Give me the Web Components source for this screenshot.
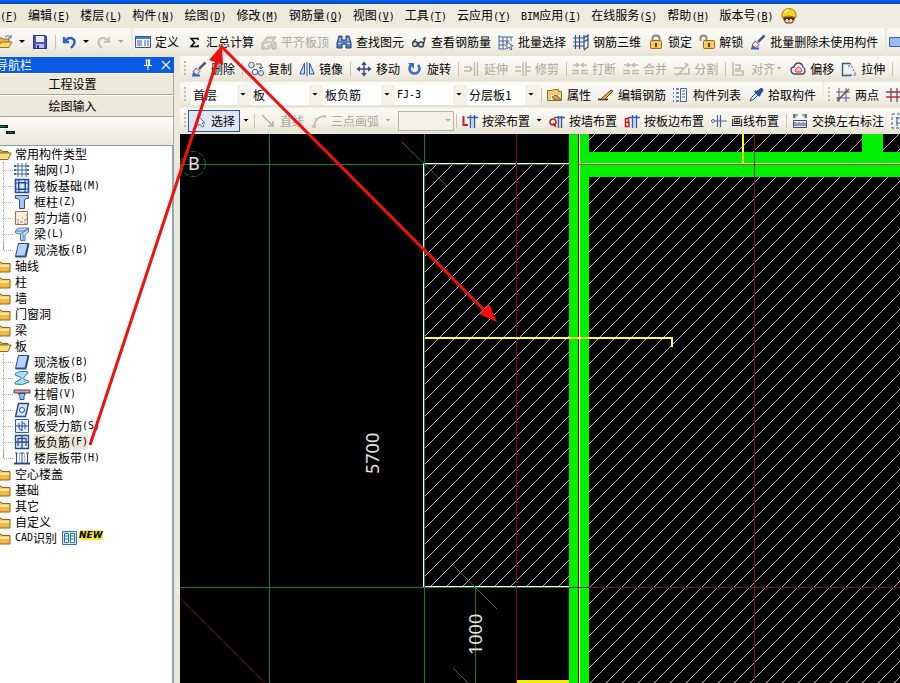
<!DOCTYPE html>
<html lang="zh-CN">
<head>
<meta charset="utf-8">
<title>钢筋算量</title>
<style>
html,body{margin:0;height:100%}
body{font:12px/16px "Noto Sans CJK SC",sans-serif;color:#000;background:#ece9d8;overflow:hidden}
</style>
</head>
<body>
<app-shell></app-shell>
<script>
const ICONS = {
open:'<path d="M1 13V4h4l1 1h6v3" fill="#e9b648" stroke="#94742a"/><path d="M1 13.500 4 8h11l-3 5.500z" fill="#ffd86b" stroke="#94742a"/><path d="M8 3q4-3 6 1m0-3v3h-3" fill="none" stroke="#4a6ea8"/>',
save:'<path d="M1.500 1.500h12l1 1v12h-13z" fill="#4a56c8" stroke="#25307e"/><path d="M4 2h8v6H4z" fill="#e6ecff"/><path d="M4 10h8v4H4z" fill="#b8c2e8"/><path d="M5 11h2v3H5z" fill="#25307e"/>',
undo:'<path d="M3 3v5h5M3.500 7.500Q8 2 12 5t-2 9" fill="none" stroke="#2f62c4" stroke-width="2.400"/>',
redo:'<path d="M13 3v5H8M12.500 7.500Q8 2 4 5t2 9" fill="none" stroke="#c6c4b8" stroke-width="2.200"/>',
define:'<path d="M.5 2.500h15v11H.5z" fill="#fff" stroke="#2c55a4"/><path d="M1 3h14v2H1z" fill="#4a7bd0"/><path d="M2 7h5M2 9h5M2 11h5M9 7h2M9 9h2M9 11h2M12 7h2M12 9h2M12 11h2" stroke="#2c55a4"/>',
sigma:'<path d="M12 6V4.500H5L8.500 8.500l-3.500 4h7V11" fill="none" stroke="#000" stroke-width="1.500"/>',
flat:'<path d="M1 15V9l5-6h9l-3 4 3 2v6h-4v-4l-3 4z" fill="#d0cec3" stroke="#b5b3a8"/><path d="M3 11l6-1M6 6h5M5 14v-3" stroke="#f5f4ee" fill="none" stroke-width="1.500"/>',
find:'<path d="M3 2h3v4h4V2h3l2 7v5h-5v-4H6v4H1V9z" fill="#5b84c4" stroke="#223f7d"/><path d="M2.500 9.500h3M11 9.500h3M4 4v3M12 4v3" stroke="#d5e4fa"/>',
glasses:'<g fill="#d9dde0" stroke="#3c4248" stroke-width="1.400"><circle cx="4" cy="10" r="2.500"/><circle cx="10" cy="10.500" r="2.500"/><path d="M6.500 9.500h1M12.500 10l1.500-6-2 1M2 8l3-3" fill="none"/></g>',
batch:'<path d="M1 1v14M1 3h14M1 7h10M1 11h7M5 3v12M9 3v8M13 3v4M1 15h7" stroke="#4b6496" fill="none"/><path d="M9 8v7l2-2 2 3 1-1-1.500-3H15z" fill="#fff" stroke="#4b6496"/>',
grid3:'<path d="M0 4h11M0 8h11M0 12h11M2.500 1v14M6.500 1v14M11 1v14M11 4l4-3v12l-4 3M11 8l4-3" fill="none" stroke="#33538f" stroke-width="1.200"/>',
lock:'<path d="M4.500 7V4.500q0-3 3.500-3t3.500 3V7" fill="none" stroke="#8b8b86" stroke-width="2"/><rect x="2.500" y="6.500" width="11" height="8" rx="1" fill="#f3bd42" stroke="#976a14"/><path d="M3 9h10M3 12h10" stroke="#ffe5a0"/><path d="M8 9v4" stroke="#5d3b00" stroke-width="2"/>',
unlock:'<path d="M1.500 7V4.500q0-3 3-3t3 3V7" fill="none" stroke="#8b8b86" stroke-width="2"/><rect x="4.500" y="6.500" width="11" height="8" rx="1" fill="#f3bd42" stroke="#976a14"/><path d="M5 9h10M5 12h10" stroke="#ffe5a0"/><path d="M10 9v4" stroke="#5d3b00" stroke-width="2"/>',
brush:'<path d="M14.500 1.500 8 8" stroke="#45588c" stroke-width="2.500"/><path d="M5 7l4 3.500L5.500 14 2 11z" fill="#f4e4dd" stroke="#7c566a"/><path d="M1 14.500h8M2 12l3 2" stroke="#3c62b4" stroke-width="2"/>',
panel:'<path d="M2.500 3.500h14v9h-14z" fill="#9cbaf2" stroke="#3d61af"/>',
copy:'<g fill="#e8edf4" stroke="#4a5f86"><circle cx="3.500" cy="4" r="2.800"/><circle cx="7" cy="11" r="2.800"/><circle cx="13" cy="12" r="2.500"/></g><path d="M8 3h5v5m-2-2 2 2 2-2" fill="none" stroke="#44587c"/>',
mirror:'<path d="M5.500 2v11H.8zM10.500 2v11h4.700z" fill="#c7daf8" stroke="#2e57a4"/><path d="M8 1v14" stroke="#2e57a4"/>',
move:'<path d="M8 2v12M2 8h12M6 4l2-2.500L10 4M6 12l2 2.500 2-2.500M4 6 1.500 8 4 10M12 6l2.500 2-2.500 2" fill="none" stroke="#2f4b83" stroke-width="1.400"/>',
rotate:'<path d="M4 4a5 5 0 1 0 7 0" fill="none" stroke="#3d6cc5" stroke-width="2.600"/><path d="M1 2h6v6z" fill="#3d6cc5"/>',
extend:'<path d="M0 6h7M0 10h7M10.500 1v14M13.500 1v14" fill="none" stroke="#bcbab0" stroke-width="1.400"/><path d="M6 5l3 3-3 3z" fill="#bcbab0"/>',
trim:'<path d="M0 6h6M0 10h6M8 1v14M11 1v14M11 6h5M11 10h5" fill="none" stroke="#bcbab0" stroke-width="1.400"/>',
brk:'<path d="M1 4h5M10 4h5M0 9.500h6v3H0M16 9.500h-6v3h6M4 2l3 2-3 2M12 2 9 4l3 2" fill="none" stroke="#bcbab0" stroke-width="1.300"/>',
split:'<path d="M0 7h9M0 13h15V7M3 15 14 3M11 2l3 3" fill="none" stroke="#bcbab0" stroke-width="1.700"/>',
align:'<path d="M2 1v14M4 4h5v4H4M4 10h8v4H4" fill="none" stroke="#bcbab0" stroke-width="1.500"/>',
offset:'<path d="M4 13q-3-1-3-4t3-3q1-4 4.500-4T13 6q2 1 2 4t-3 3z" fill="#eae9f3" stroke="#434b77" stroke-width="1.300"/><path d="M6 11q-2-1 0-3 1-2 2.500-2T11 8q2 2 0 3z" fill="#ffc2bb" stroke="#c33f36"/>',
stretch:'<path d="M10 14.500H1.500v-12H9" fill="none" stroke="#2e57a4" stroke-width="1.400"/><path d="M9 2l3 6 3 6M9 14h6M8 4v4" stroke="#2e57a4" stroke-dasharray="2 1.500" fill="none"/>',
prop:'<path d="M.5 3.500h5l1-1h5v2h3v9H.5z" fill="#f2cd6b" stroke="#8d702a"/><path d="M4 8h9v5H4z" fill="#fff"/><path d="M5 10q3-3 6-1l3 4-4-1-3 1z" fill="#d99a50" stroke="#6b4420" stroke-width=".7"/>',
edit:'<path d="M0 12.500h10" stroke="#222" stroke-width="1.500"/><path d="M4 11l9-8 2 1-8 8-3 1z" fill="#e1a951" stroke="#5e3c1b"/>',
list:'<path d="M3 2h3M3 6h3M3 10h3M3 14h3M0 2h1M0 6h1M0 10h1M0 14h1" stroke="#3d61af" stroke-width="1.500"/><path d="M7.500 1.500h6v13h-6z" fill="#fff" stroke="#3d61af"/><path d="M9 4h3M9 7h3M9 10h3" stroke="#3d61af"/>',
pick:'<path d="M2 14q0-3 6-8l2 2q-5 6-8 6z" fill="#d6e8fd" stroke="#254c99"/><path d="M7 4l5 5M9 5l4-3q2 0 1 2l-3 4z" fill="#2e63bd" stroke="#254c99" stroke-width="2"/>',
twopt:'<path d="M4 1v14M11 1v14M1 5h14M1 11h14" stroke="#46598b"/><path d="M2 14 14 2" stroke="#7c4923" stroke-width="1.500"/>',
parallel:'<path d="M5 1v14M11 1v14" stroke="#46598b" stroke-width="1.300"/><path d="M0 5h16M0 10h16" stroke="#bb2b2f" stroke-width="1.300"/>',
pointer:'<path d="M7 3v10l2-2 2 3 2-1-2-3h3z" fill="#fff" stroke="#5873a8"/>',
line:'<path d="M2 2l11 11M13 8v5H8" fill="none" stroke="#b5b3a8" stroke-width="1.600"/>',
arc:'<path d="M3 14Q4 4 13 3" fill="none" stroke="#b5b3a8" stroke-width="1.500"/><path d="M1 12h4v3H1zM4 5h3v3H4zM12 2h3v3h-3z" fill="#c9c7bd"/>',
beamput:'<path d="M1.500 3v9H6" fill="none" stroke="#c22023" stroke-width="2"/><path d="M5 4.500h11M8.500 2v13M12.500 2v13" fill="none" stroke="#395a9c" stroke-width="1.400"/><path d="M9 5h3v10H9z" fill="#bdcdec"/>',
wallput:'<circle cx="4" cy="9" r="3" fill="none" stroke="#c22023" stroke-width="1.600"/><path d="M4 10l3 4" stroke="#c22023" stroke-width="1.500"/><path d="M5 4.500h11M9.500 3v12M12.500 3v12" fill="none" stroke="#395a9c" stroke-width="1.400"/>',
slabput:'<path d="M1.500 5.500h3v4h-3zM1.500 9.500H5v4H1.500z" fill="none" stroke="#c22023" stroke-width="1.500"/><path d="M4 4.500h12M8.500 2v13M12.500 2v13" fill="none" stroke="#395a9c" stroke-width="1.400"/><path d="M9 5h3v9H9z" fill="#bdcdec"/>',
drawput:'<path d="M0 8h6M10 8h6M6.500 2v12M9.500 2v12M6 8h4" fill="none" stroke="#4a6594" stroke-width="1.200"/><circle cx="2" cy="8" r="1.500" fill="#fff" stroke="#4a6594"/>',
swap:'<path d="M1 2h5M10 2h5M1 4h3M15 4h-3M2 1v4M14 1v4" stroke="#3b4a68" fill="none"/><path d="M1.500 7.500h13v7h-13z" fill="#e5e8ee" stroke="#3b4a68"/><path d="M3 13V9M5 13v-3M7 13V9M9 13v-3M11 13V9M13 13v-3" stroke="#3b4a68"/>',
frame:'<path d="M1 1h14v14H1z" fill="none" stroke="#37579a" stroke-dasharray="3 2"/><path d="M5 5h10M5 10h10M6 4v9" stroke="#37579a"/>',
helmet:'<path d="M3 9h10v3l-2 3H5l-2-3z" fill="#e0a283" stroke="#6b3428"/><path d="M2 9h12l-1 3H3z" fill="#5b3020"/><path d="M5 11h2v3H5zM9 11h2v3H9z" fill="#fbe5cf"/><path d="M1 9.500Q0 1 8 .5q8 .5 7 9-7-3-14 0z" fill="#f7d21f" stroke="#a98208"/><path d="M4 5q1-3 4-3" stroke="#fff7b0" fill="none" stroke-width="1.500"/>',
folder:'<path d="M0 4h5l1 1.500h8V14H0z" fill="#f2b93e" stroke="#8b671d"/><path d="M1 6.500h12V9H1z" fill="#ffe7a2"/>',
folderopen:'<path d="M0 13V4h5l1 1.500h6V8" fill="#e5ad3b" stroke="#8b671d"/><path d="M0 13.500 3 7h12L12 13.500z" fill="#ffdd81" stroke="#8b671d"/>',
axis:'<path d="M4 1v14M8 1v14M12 1v14M1 4h13M1 8h13M1 12h13" stroke="#3563ba"/><path d="M0 3h2v2H0zM0 7h2v2H0zM0 11h2v2H0zM13 3h2v2h-2zM13 7h2v2h-2zM13 11h2v2h-2z" fill="#3563ba"/>',
raft:'<path d="M1.500 1.500h13v13h-13z" fill="#dbe7ff" stroke="#1f489f" stroke-width="1.600"/><path d="M4.500 4.500h7v7h-7zM5 1v14M11 1v14M1 5h14M1 11h14" fill="none" stroke="#1f489f"/>',
column:'<path d="M1.500 1.500h13v3h-2L10.500 6v8.500h-5V6L3.500 4.500h-2z" fill="#a9c5f7" stroke="#274f9e"/>',
wall:'<path d="M1.500 1.500h12v13h-12z" fill="#fbeee3" stroke="#a36d4c"/><path d="M3 10h2M6 12h3M10 10h2M3 13h2M10 13h2M8 8h1M12 5h2M12 9h2" stroke="#b66d42"/>',
beam:'<path d="M1.500 4.500 5 2h9.500v4L11 9v5.500H6.500V8L1.500 7z" fill="#cbe0fc" stroke="#3f7dbd"/><path d="M6.500 8 14 3M2 5h8l4-2M9 8v6" stroke="#3f7dbd" fill="none"/>',
slab:'<path d="M4.500 1.500h10l-3 13h-10z" fill="#b9d4fb" stroke="#254a94"/><path d="M1.500 14.500h10l3-13" fill="none" stroke="#254a94" stroke-width="2"/>',
spiral:'<path d="M1 4q5-4 13-2 0 2-3 4t0 4q4 0 4 2-6 4-14 2-1-2 4-4t-1-4q-3 0-3-2z" fill="#aadcf5" stroke="#2c71b8"/>',
cap:'<path d="M0 4h16v3H0z" fill="#d9a49c" stroke="#503c4c"/><path d="M4.500 7.500h7l-1.500 3v3H6v-3z" fill="#97c3f1" stroke="#274f9e"/>',
hole:'<path d="M4.500 1.500h10l-3 13h-10z" fill="#d5e5fd" stroke="#254a94" stroke-width="1.400"/><circle cx="8" cy="8" r="2.500" fill="#fff" stroke="#254a94"/>',
rebar1:'<path d="M1.500 1.500h13v13h-13z" fill="#e2edff" stroke="#3460b0"/><path d="M2 8h12M8 3v10M5 5v5q0 2 3 2M11 11V6q0-1-2-1" fill="none" stroke="#254a94"/>',
rebar2:'<path d="M1.500 1.500h13v13h-13z" fill="#e2edff" stroke="#254a94" stroke-width="1.300"/><path d="M2 8h12M4 12V8M12 12V8M4 7V4.500h8V7M8 2v12" fill="none" stroke="#254a94" stroke-width="1.300"/>',
strip:'<path d="M0 13.500h16" stroke="#254a94" stroke-width="2"/><path d="M2.500 3v10M8 3v10M13.500 3v10" stroke="#254a94"/><path d="M5 3h1v10H5zM10 3h1v10h-1z" fill="#9fbdf0"/><path d="M1 3h3M6 3h4M12 3h3" stroke="#254a94"/>',
cad:'<path d="M.5 1.500h14v13H.5z" fill="#c9e3f7" stroke="#2d74a8"/><path d="M2.500 3.500h4v9h-4zM8.500 3.500h4v9h-4zM3 6h3M3 9h3M9 6h3M9 9h3" fill="#fff" stroke="#2d74a8"/>',
pin:'<path d="M5.500 3h5M6.500 3v5M9.500 3v5M8.700 3v5M4 8.500h8M8 9v4" stroke="#fff" stroke-width="1.200"/>',
close:'<path d="m4 4 8 8M12 4l-8 8" stroke="#fff" stroke-width="1.200"/>',
levels:'<path d="M0 2h8v3H0zM6 8h9v3H6z" fill="#04231c"/><path d="M0 3h6v1H0zM8 9h5v1H8z" fill="#15705c"/>'
};

function define(name, html, setup) {
  const template = document.createElement('template');
  template.innerHTML = html;
  customElements.define(name, class extends HTMLElement {
    connectedCallback() {
      if (this.shadowRoot) return;
      const root = this.attachShadow({ mode: 'open' });
      root.append(template.content.cloneNode(true));
      if (setup) setup(this, root);
    }
  });
}

define('ui-icon', `<style>:host{display:block;flex:none;width:16px;height:16px}svg{display:block;overflow:visible}</style><svg width="16" height="16" viewBox="0 0 16 16" aria-hidden="true"></svg>`,
  (el, root) => { root.querySelector('svg').innerHTML = ICONS[el.getAttribute('name')] || ''; });

define('hot-key', `<style>:host{font:10px/16px "DejaVu Sans Mono",monospace}</style><span>(<u><slot></slot></u>)</span>`);
define('hot-key-plain', `<style>:host{font:10px/16px "DejaVu Sans Mono",monospace}</style><span>(<slot></slot>)</span>`);
define('mono-text', `<style>:host{font:10px/16px "DejaVu Sans Mono",monospace}</style><slot></slot>`);

define('menu-item', `<style>:host{display:block;flex:none}button{all:unset;display:block;white-space:nowrap}</style><button type="button"><slot></slot></button>`);

define('menu-bar', `<style>
:host{display:flex;align-items:center;gap:10px;height:24px;background:linear-gradient(90deg,#ece9d8,#f0eee3);overflow:hidden}
</style><slot></slot>`);

define('tool-button', `<style>
:host{display:block;flex:none;margin-right:7px}
:host([wide]){margin-right:6px}
:host([pressed]){margin-left:-3px;margin-right:4px}
button{all:unset;display:flex;align-items:center;height:22px;box-sizing:border-box;white-space:nowrap}
.label{display:block;margin-left:4px}
:host([icon-only]) .label{display:none}
.drop{display:none;width:8px;height:4px;background:currentColor;clip-path:polygon(1px 0,7px 0,4px 3px)}
:host([drop]) .drop{display:block}
:host([disabled]) button{color:#aca899}
:host([wide]) .drop{margin-left:5px}
:host([pressed]) .drop{margin-left:2px}
.face{display:flex;align-items:center;box-sizing:border-box;height:22px}
:host([pressed]) .face{border:1px solid #2f53a6;background:#dfe6f2;padding:0 4px 0 2px}
</style><button type="button"><span class="face"><ui-icon></ui-icon><span class="label"><slot></slot></span></span><span class="drop"></span></button>`,
  (el, root) => {
    const icon = document.createElement('ui-icon');
    icon.setAttribute('name', el.getAttribute('icon'));
    root.querySelector('ui-icon').replaceWith(icon);
    const button = root.querySelector('button');
    button.disabled = el.hasAttribute('disabled');
    if (el.title) button.setAttribute('aria-label', el.title);
    if (el.hasAttribute('pressed')) button.setAttribute('aria-pressed', 'true');
  });

define('tool-sep', `<style>:host{display:block;flex:none;width:1px;height:14px;margin-right:5px;background:#c5c2b2}</style>`);

define('tool-bar', `<style>
:host{display:flex;align-items:center;flex:none;box-sizing:border-box;background:linear-gradient(#fbfaf6,#f3f1e8 60%,#e6e3d2);border-radius:3px}
:host([fill]){flex:1 0 auto}
:host([lead]){padding-left:2px}
.grip{flex:none;width:2px;height:16px;margin:0 5px 0 4px;background:repeating-linear-gradient(#bdbaa9 0 2px,transparent 2px 4px)}
:host([nogrip]) .grip{display:none}
</style><span class="grip"></span><slot></slot>`);

define('tool-select', `<style>
:host{display:block;flex:none;width:72px}
select{appearance:none;display:block;width:100%;height:20px;border:0;border-radius:0;padding:0 14px 0 2px;font:12px/16px "Noto Sans CJK SC",sans-serif;color:#000;opacity:1;
background:linear-gradient(90deg,#fff calc(100% - 14px),#f3f1e8 calc(100% - 14px))}
:host([mono]) select{font:10px/16px "DejaVu Sans Mono",monospace}
:host([small]){width:60px}
:host([boxed]){width:56px;margin-right:2px}
:host([boxed]) select{border:1px solid #b9b6a8;background:#f3f1e8}
.wrap{display:grid;align-items:center}
.wrap>*{grid-area:1/1}
.arrow{justify-self:end;width:8px;height:4px;margin-right:4px;background:#000;clip-path:polygon(1px 0,7px 0,4px 3px);pointer-events:none;z-index:1}
:host([boxed]) .arrow{background:#aca899;margin-right:2px}
</style><div class="wrap"><select><option></option></select><span class="arrow"></span></div>`,
  (el, root) => {
    const select = root.querySelector('select');
    select.options[0].textContent = el.getAttribute('value') || '';
    select.setAttribute('aria-label', el.getAttribute('label'));
    select.disabled = el.hasAttribute('boxed');
  });

define('tree-row', `<style>
:host{display:flex;align-items:center;height:16px;white-space:nowrap}
ui-icon{margin-left:-4px;margin-right:3px}
:host([child]) ui-icon{margin:0 4px 0 0}
.lead{display:none;flex:none;width:11px;height:16px;margin-left:3px;box-sizing:border-box;border-left:1px dotted #aaa897;background:repeating-linear-gradient(90deg,#aaa897 0 1px,transparent 1px 2px) 0 8px/100% 1px no-repeat}
:host([last]) .lead{border-image:linear-gradient(#aaa897 50%,transparent 50%) 1}
:host([child]) .lead{display:block}
:host([selected]) .text{background:#ece9d8}
.text{display:flex;height:16px}
</style><span class="lead"></span><ui-icon></ui-icon><span class="text"><slot></slot></span>`,
  (el, root) => {
    const icon = document.createElement('ui-icon');
    icon.setAttribute('name', el.getAttribute('icon'));
    root.querySelector('ui-icon').replaceWith(icon);
    el.setAttribute('role', 'treeitem');
  });

define('new-badge', `<style>:host{display:flex;align-items:center;margin-left:5px;gap:1px}b{display:block;font:italic bold 9px/10px "DejaVu Sans",sans-serif;background:#fbe72b;border-radius:3px;margin-bottom:6px}</style><ui-icon name="cad"></ui-icon><b>NEW</b>`);

define('nav-panel', `<style>
:host{display:flex;flex-direction:column;min-height:0;box-sizing:border-box;padding-top:1px;padding-right:2px}
header{display:flex;align-items:center;height:16px;flex:none;background:#0a5be3;color:#fff;overflow:hidden}
header span{flex:1;white-space:nowrap;margin-left:-4px}
header button{all:unset;width:16px;margin-right:2px}
header button:last-child{margin-right:0}
.tab{appearance:none;box-sizing:border-box;flex:none;height:22px;margin:0;padding:0 28px 0 0;border:0;border-top:1px solid #fff;border-bottom:1px solid #aca899;border-right:1px solid #aca899;background:#ece9d8;font:inherit;color:inherit}
.strip{flex:none;display:flex;align-items:center;height:29px;box-sizing:border-box;border-bottom:1px solid #7f9db9;border-right:1px solid #aca899;background:linear-gradient(#fcfbf8,#eae7d9)}
.tree{flex:1;background:#fff;border-right:2px solid #8fa5b8;overflow:hidden}
</style>
<header><span>导航栏</span><button type="button" aria-label="固定"><ui-icon name="pin"></ui-icon></button><button type="button" aria-label="关闭"><ui-icon name="close"></ui-icon></button></header>
<button class="tab" type="button">工程设置</button><button class="tab" type="button">绘图输入</button>
<div class="strip"><ui-icon name="levels"></ui-icon></div>
<div class="tree" role="tree">
<tree-row icon="folderopen">常用构件类型</tree-row>
<tree-row child icon="axis">轴网<hot-key-plain>J</hot-key-plain></tree-row>
<tree-row child icon="raft">筏板基础<hot-key-plain>M</hot-key-plain></tree-row>
<tree-row child icon="column">框柱<hot-key-plain>Z</hot-key-plain></tree-row>
<tree-row child icon="wall">剪力墙<hot-key-plain>Q</hot-key-plain></tree-row>
<tree-row child icon="beam">梁<hot-key-plain>L</hot-key-plain></tree-row>
<tree-row child last icon="slab">现浇板<hot-key-plain>B</hot-key-plain></tree-row>
<tree-row icon="folder">轴线</tree-row>
<tree-row icon="folder">柱</tree-row>
<tree-row icon="folder">墙</tree-row>
<tree-row icon="folder">门窗洞</tree-row>
<tree-row icon="folder">梁</tree-row>
<tree-row icon="folderopen">板</tree-row>
<tree-row child icon="slab">现浇板<hot-key-plain>B</hot-key-plain></tree-row>
<tree-row child icon="spiral">螺旋板<hot-key-plain>B</hot-key-plain></tree-row>
<tree-row child icon="cap">柱帽<hot-key-plain>V</hot-key-plain></tree-row>
<tree-row child icon="hole">板洞<hot-key-plain>N</hot-key-plain></tree-row>
<tree-row child icon="rebar1">板受力筋<hot-key-plain>S</hot-key-plain></tree-row>
<tree-row child selected icon="rebar2">板负筋<hot-key-plain>F</hot-key-plain></tree-row>
<tree-row child last icon="strip">楼层板带<hot-key-plain>H</hot-key-plain></tree-row>
<tree-row icon="folder">空心楼盖</tree-row>
<tree-row icon="folder">基础</tree-row>
<tree-row icon="folder">其它</tree-row>
<tree-row icon="folder">自定义</tree-row>
<tree-row icon="folder"><mono-text>CAD</mono-text>识别<new-badge></new-badge></tree-row>
</div>`);

define('plan-canvas', `<style>
:host{display:block;flex:1;min-height:0;background:#000;overflow:hidden;contain:size}
svg{display:block;width:100%;height:100%}
text{font:18px "Noto Sans",sans-serif;fill:#e4e4e4}
</style>
<svg role="img" aria-label="平面图">
<defs><pattern id="hatch" width="16" height="16" patternUnits="userSpaceOnUse"><path d="M-1 10 10-1M8 17 17 8" stroke="#b8b8b8" stroke-width="1" fill="none" shape-rendering="crispEdges"/></pattern></defs>
<g transform="translate(-180 -134)">
<g fill="url(#hatch)"><path d="M425 165h144v421H425zM589 134h273v18H589zM883 134h1000v18H883zM589 177h2000v1500H589z"/></g>
<path d="M424 587V163.500h146M424 586.500h146" fill="none" stroke="#fff" shape-rendering="crispEdges"/>
<g fill="none" stroke="#157f22" shape-rendering="crispEdges"><path d="M180 164.500h400M269.500 134v1500M424.500 134v1500M180 587.500h390M475.500 588v1000"/></g>
<path d="M423.500 163v424" stroke="#fff" shape-rendering="crispEdges"/>
<g fill="none" stroke="#0f7f1c"><path d="M402 142l45 44M453 565l44 44M453 668l44 44"/><circle cx="193" cy="164" r="12.500" stroke-dasharray="6 2"/></g>
<g fill="#00f000"><path d="M569 134h20v1500h-20zM589 152h2000v25H589zM862 134h21v20h-21z"/></g>
<g shape-rendering="crispEdges">
<path d="M516.500 134v1500M754.500 134v1500M589 587.500h2000" stroke="#820b0b" fill="none"/>
<path d="M578.500 134v1500" stroke="#7a1010"/><path d="M579.500 134v1500" stroke="#fff"/>
<path d="M580 163.500h2000" stroke="#c8d8b8"/><path d="M578 164.500h2000" stroke="#9c5a10"/>
<path d="M754.500 152v25M569 587.500h20" stroke="#053d05"/>
<path d="M425 338h247v9" stroke="#ffff3c" stroke-width="2" fill="none"/><path d="M743 134v29" stroke="#ff0" stroke-width="2"/><path d="M517 680h52v60h-52z" fill="#f5ea00"/></g>
<path d="M180 598l85 85" stroke="#7c0808"/>
<text x="188" y="170">B</text>
<text transform="translate(379 474) rotate(-90)">5700</text>
<text transform="translate(482 655) rotate(-90)">1000</text>
</g></svg>`);

define('red-arrows', `<style>:host{position:absolute;inset:0;pointer-events:none;overflow:hidden}svg{display:block;width:100%;height:100%}</style>
<svg aria-hidden="true"><g stroke="#f01010" stroke-width="3" fill="none"><path d="M90 445 218 58M221 46l265 266"/></g><path d="M222 45l1 20-14-5zM497 322l-18-8 10-10z" fill="#f01010"/></svg>`);

define('app-shell', `<style>
:host{display:flex;flex-direction:column;position:relative;height:100vh;overflow:hidden}
.title{flex:none;height:4px;background:linear-gradient(#0a62ee,#0346b8)}
.row{display:flex;flex:none;gap:1px;overflow:hidden;padding-bottom:1px;height:25px}
.top{height:28px;padding:0;gap:2px}
.body{flex:1;min-height:0;display:grid;grid-template-columns:176px minmax(0,1fr);gap:4px}
.work{display:flex;flex-direction:column;min-width:0;min-height:0}
.open{margin-left:-3px}
.select-group{display:flex;margin-right:2px}
</style>
<div class="title"></div>
<menu-bar>
<menu-item><hot-key>F</hot-key></menu-item><menu-item>编辑<hot-key>E</hot-key></menu-item><menu-item>楼层<hot-key>L</hot-key></menu-item><menu-item>构件<hot-key>N</hot-key></menu-item><menu-item>绘图<hot-key>D</hot-key></menu-item><menu-item>修改<hot-key>M</hot-key></menu-item><menu-item>钢筋量<hot-key>Q</hot-key></menu-item><menu-item>视图<hot-key>V</hot-key></menu-item><menu-item>工具<hot-key>T</hot-key></menu-item><menu-item>云应用<hot-key>Y</hot-key></menu-item><menu-item><mono-text>BIM</mono-text>应用<hot-key>I</hot-key></menu-item><menu-item>在线服务<hot-key>S</hot-key></menu-item><menu-item>帮助<hot-key>H</hot-key></menu-item><menu-item>版本号<hot-key>B</hot-key></menu-item><ui-icon name="helmet" style="margin-left:-3px"></ui-icon>
</menu-bar>
<div class="row top">
<tool-bar nogrip><tool-button class="open" icon="open" icon-only drop wide title="打开"></tool-button><tool-button icon="save" icon-only title="保存"></tool-button><tool-sep></tool-sep><tool-button icon="undo" icon-only drop wide title="撤销"></tool-button><tool-button icon="redo" icon-only disabled drop wide title="恢复"></tool-button></tool-bar>
<tool-bar nogrip lead>
<tool-button icon="define">定义</tool-button><tool-button icon="sigma">汇总计算</tool-button><tool-button icon="flat" disabled>平齐板顶</tool-button><tool-button icon="find">查找图元</tool-button><tool-button icon="glasses">查看钢筋量</tool-button><tool-button icon="batch">批量选择</tool-button><tool-button icon="grid3">钢筋三维</tool-button><tool-button icon="lock">锁定</tool-button><tool-button icon="unlock">解锁</tool-button><tool-button icon="brush">批量删除未使用构件</tool-button></tool-bar>
<tool-bar nogrip fill><tool-button icon="panel" icon-only title="面板"></tool-button></tool-bar>
</div>
<div class="body">
<nav-panel></nav-panel>
<div class="work">
<div class="row"><tool-bar fill>
<tool-button icon="brush">删除</tool-button><tool-sep></tool-sep><tool-button icon="copy">复制</tool-button><tool-button icon="mirror">镜像</tool-button><tool-sep></tool-sep><tool-button icon="move">移动</tool-button><tool-button icon="rotate">旋转</tool-button><tool-sep></tool-sep><tool-button icon="extend" disabled>延伸</tool-button><tool-button icon="trim" disabled>修剪</tool-button><tool-sep></tool-sep><tool-button icon="brk" disabled>打断</tool-button><tool-button icon="brk" disabled>合并</tool-button><tool-button icon="split" disabled>分割</tool-button><tool-sep></tool-sep><tool-button icon="align" disabled drop>对齐</tool-button><tool-button icon="offset">偏移</tool-button><tool-button icon="stretch">拉伸</tool-button><tool-sep></tool-sep></tool-bar></div>
<div class="row"><tool-bar>
<div class="select-group"><tool-select small label="楼层" value="首层"></tool-select><tool-select label="类别" value="板"></tool-select><tool-select label="类型" value="板负筋"></tool-select><tool-select mono label="构件" value="FJ-3"></tool-select><tool-select label="分层" value="分层板1"></tool-select></div>
<tool-sep></tool-sep><tool-button icon="prop">属性</tool-button><tool-button icon="edit">编辑钢筋</tool-button><tool-button icon="list">构件列表</tool-button><tool-button icon="pick">拾取构件</tool-button></tool-bar>
<tool-bar fill><tool-button icon="twopt">两点</tool-button><tool-button icon="parallel" icon-only title="平行"></tool-button></tool-bar></div>
<div class="row"><tool-bar fill>
<tool-button icon="pointer" pressed drop>选择</tool-button><tool-sep></tool-sep><tool-button icon="line" disabled>直线</tool-button><tool-button icon="arc" disabled drop wide>三点画弧</tool-button><tool-select boxed label="画法"></tool-select><tool-sep></tool-sep><tool-button icon="beamput" drop wide>按梁布置</tool-button><tool-button icon="wallput">按墙布置</tool-button><tool-button icon="slabput">按板边布置</tool-button><tool-button icon="drawput">画线布置</tool-button><tool-sep></tool-sep><tool-button icon="swap">交换左右标注</tool-button><tool-button icon="frame" icon-only title="框选"></tool-button></tool-bar></div>
<plan-canvas></plan-canvas>
</div></div>
<red-arrows></red-arrows>`);
</script>
</body>
</html>
